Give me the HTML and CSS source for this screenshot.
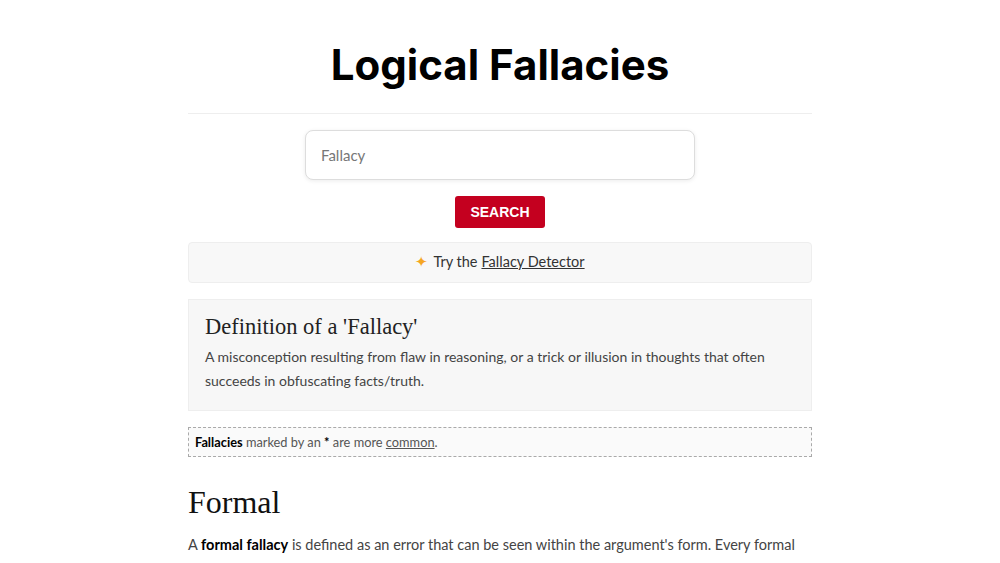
FILE: index.html
```html
<!DOCTYPE html>
<html lang="en">
<head>
<meta charset="utf-8">
<title>Logical Fallacies</title>
<link rel="stylesheet" href="styles.css">
</head>
<body>
<main class="page">
  <h1 class="title">Logical Fallacies</h1>
  <hr class="rule">
  <form class="search">
    <input class="search-input" type="text" placeholder="Fallacy">
    <button class="search-btn" type="button">SEARCH</button>
  </form>
  <div class="try-box">
    <span class="spark">&#10022;</span> Try the <a href="#">Fallacy Detector</a>
  </div>
  <section class="def-box">
    <h2 class="def-title">Definition of a 'Fallacy'</h2>
    <p class="def-text">A misconception resulting from flaw in reasoning, or a trick or illusion in thoughts that often succeeds in obfuscating facts/truth.</p>
  </section>
  <div class="note-box"><b>Fallacies</b> marked by an <b>*</b> are more <a href="#">common</a>.</div>
  <h2 class="section-title">Formal</h2>
  <p class="section-text">A <b>formal fallacy</b> is defined as an error that can be seen within the argument's form. Every formal fallacy is a non sequitur: an argument whose conclusion does not follow.</p>
</main>
</body>
</html>
```
FILE: styles.css
```css
html, body {
  margin: 0;
  padding: 0;
  background: #fff;
}
body {
  font-family: "Lato", "Inter", sans-serif;
  color: #333;
}
.page {
  width: 624px;
  margin: 0 auto;
  padding-top: 40px;
}
.title {
  margin: 0;
  text-align: center;
  font-family: "Inter", "Lato", sans-serif;
  font-weight: 700;
  font-size: 42px;
  line-height: 50px;
  color: #000;
}
.rule {
  border: 0;
  border-top: 1px solid #eee;
  margin: 23px 0 16px;
}
.search {
  display: flex;
  flex-direction: column;
  align-items: center;
}
.search-input {
  box-sizing: border-box;
  width: 390px;
  height: 50px;
  border: 1px solid #ddd;
  border-radius: 8px;
  box-shadow: 0 1px 4px rgba(0,0,0,0.08);
  padding: 0 15px;
  font-family: "Lato", sans-serif;
  font-size: 15px;
  color: #333;
  outline: none;
}
.search-input::placeholder {
  color: #777;
}
.search-btn {
  margin-top: 16px;
  width: 90px;
  height: 32px;
  border: 0;
  border-radius: 3px;
  background: #c4001f;
  color: #fff;
  font-family: "Liberation Sans", sans-serif;
  font-weight: 700;
  font-size: 14px;
}
.try-box {
  margin-top: 14px;
  height: 41px;
  box-sizing: border-box;
  border: 1px solid #eee;
  border-radius: 4px;
  background: #f8f8f8;
  display: flex;
  align-items: center;
  justify-content: center;
  font-size: 14.5px;
  color: #333;
  gap: 4px;
  padding-bottom: 3px;
}
.try-box a {
  color: #333;
}
.spark {
  color: #f5a623;
  font-size: 15px;
  margin-right: 1px;
}
.def-box {
  margin-top: 16px;
  background: #f7f7f7;
  border: 1px solid #eee;
  padding: 13px 16px 16px;
  height: 112px;
  box-sizing: border-box;
}
.def-title {
  margin: 0;
  font-family: "Liberation Serif", serif;
  font-weight: 400;
  font-size: 22.5px;
  line-height: 28px;
  color: #222;
}
.def-text {
  margin: 4px 0 0;
  font-size: 14px;
  line-height: 24px;
  color: #444;
}
.note-box {
  margin-top: 16px;
  border: 1px dashed #aaa;
  background: #fafafa;
  padding: 6px 6px;
  font-size: 12.8px;
  line-height: 16px;
  color: #555;
}
.note-box b {
  color: #000;
}
.note-box a {
  color: #555;
}
.section-title {
  margin: 27px 0 0;
  font-family: "Liberation Serif", serif;
  font-weight: 400;
  font-size: 32px;
  line-height: 36px;
  color: #111;
}
.section-text {
  margin: 13px 0 0;
  font-size: 14.5px;
  line-height: 24px;
  color: #444;
}
.section-text b {
  color: #000;
}
```
